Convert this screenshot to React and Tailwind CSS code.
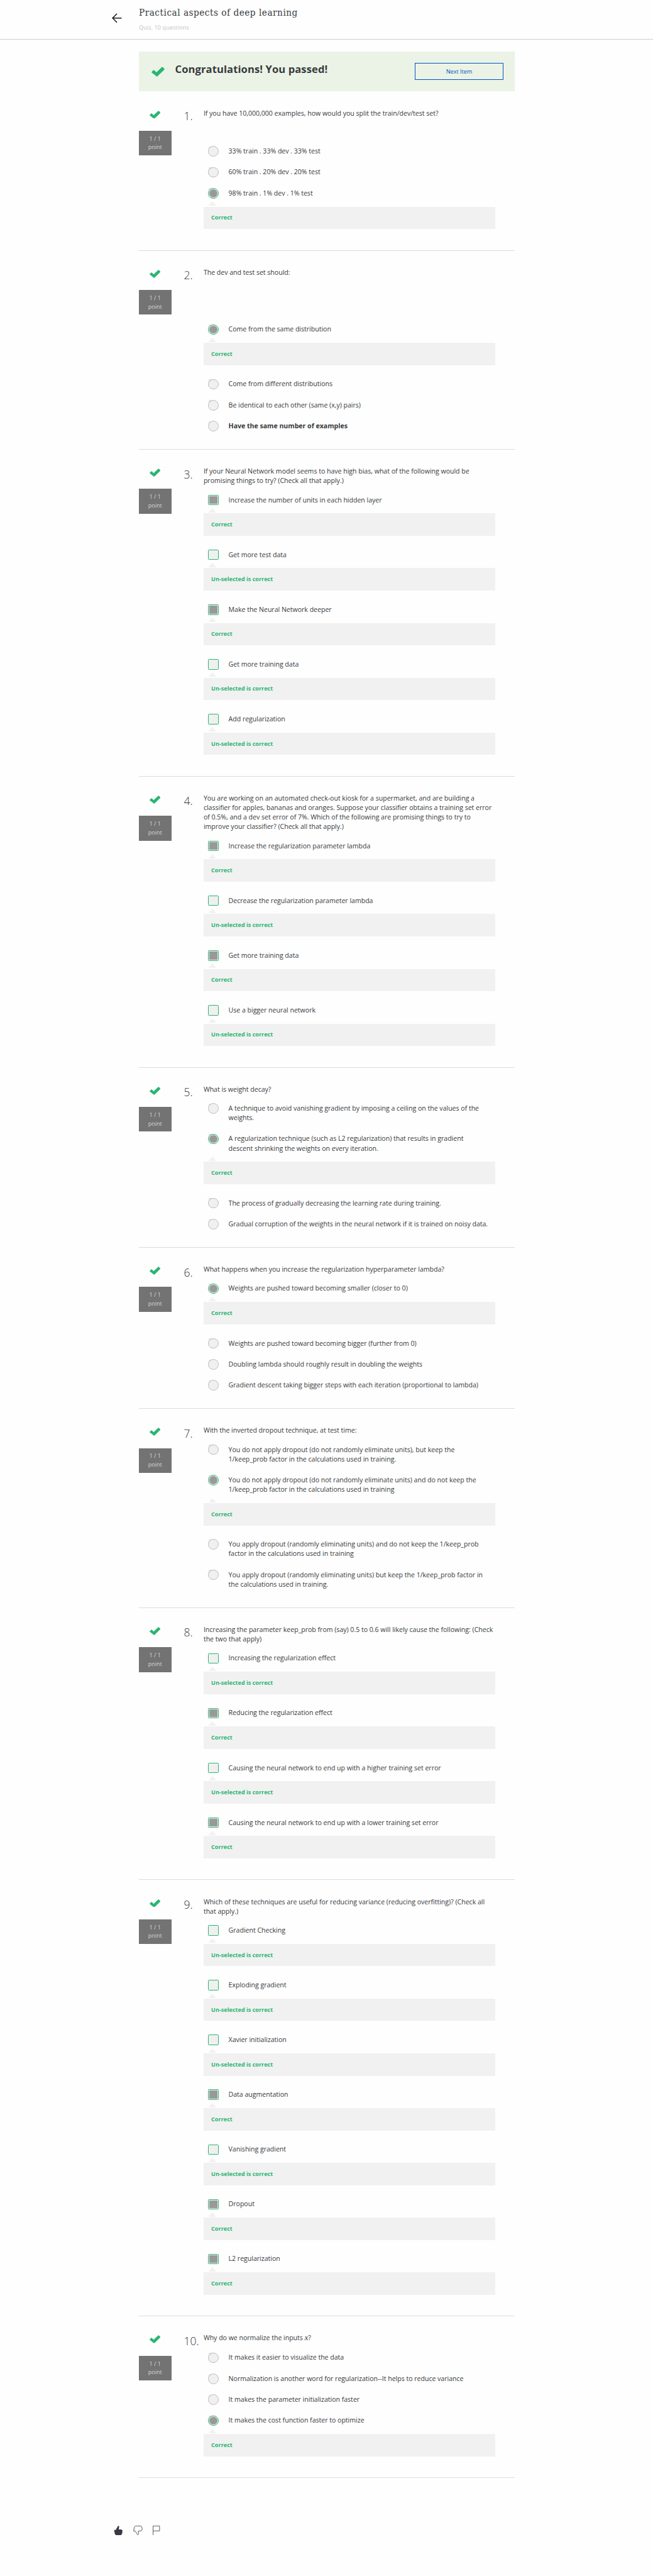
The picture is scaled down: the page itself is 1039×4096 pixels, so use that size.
import React from "react";

const SANS = "font-['Open_Sans','Noto_Sans',sans-serif]";

const questions = [
  {
    lines: ["If you have 10,000,000 examples, how would you split the train/dev/test set?"],
    gap: "h-[30.3px]",
    type: "radio",
    options: [
      { lines: ["33% train . 33% dev . 33% test"] },
      { lines: ["60% train . 20% dev . 20% test"] },
      { lines: ["98% train . 1% dev . 1% test"], on: true, note: "Correct" },
    ],
  },
  {
    lines: ["The dev and test set should:"],
    gap: "h-[60.4px]",
    type: "radio",
    options: [
      { lines: ["Come from the same distribution"], on: true, note: "Correct" },
      { lines: ["Come from different distributions"] },
      { lines: ["Be identical to each other (same (x,y) pairs)"] },
      { lines: ["Have the same number of examples"], bold: true },
    ],
  },
  {
    lines: [
      "If your Neural Network model seems to have high bias, what of the following would be",
      "promising things to try? (Check all that apply.)",
    ],
    type: "check",
    options: [
      { lines: ["Increase the number of units in each hidden layer"], on: true, note: "Correct" },
      { lines: ["Get more test data"], note: "Un-selected is correct" },
      { lines: ["Make the Neural Network deeper"], on: true, note: "Correct" },
      { lines: ["Get more training data"], note: "Un-selected is correct" },
      { lines: ["Add regularization"], note: "Un-selected is correct" },
    ],
  },
  {
    lines: [
      "You are working on an automated check-out kiosk for a supermarket, and are building a",
      "classifier for apples, bananas and oranges. Suppose your classifier obtains a training set error",
      "of 0.5%, and a dev set error of 7%. Which of the following are promising things to try to",
      "improve your classifier? (Check all that apply.)",
    ],
    type: "check",
    options: [
      { lines: ["Increase the regularization parameter lambda"], on: true, note: "Correct" },
      { lines: ["Decrease the regularization parameter lambda"], note: "Un-selected is correct" },
      { lines: ["Get more training data"], on: true, note: "Correct" },
      { lines: ["Use a bigger neural network"], note: "Un-selected is correct" },
    ],
  },
  {
    lines: ["What is weight decay?"],
    type: "radio",
    options: [
      {
        lines: [
          "A technique to avoid vanishing gradient by imposing a ceiling on the values of the",
          "weights.",
        ],
      },
      {
        lines: [
          "A regularization technique (such as L2 regularization) that results in gradient",
          "descent shrinking the weights on every iteration.",
        ],
        on: true,
        note: "Correct",
      },
      { lines: ["The process of gradually decreasing the learning rate during training."] },
      { lines: ["Gradual corruption of the weights in the neural network if it is trained on noisy data."] },
    ],
  },
  {
    lines: ["What happens when you increase the regularization hyperparameter lambda?"],
    type: "radio",
    options: [
      { lines: ["Weights are pushed toward becoming smaller (closer to 0)"], on: true, note: "Correct" },
      { lines: ["Weights are pushed toward becoming bigger (further from 0)"] },
      { lines: ["Doubling lambda should roughly result in doubling the weights"] },
      { lines: ["Gradient descent taking bigger steps with each iteration (proportional to lambda)"] },
    ],
  },
  {
    lines: ["With the inverted dropout technique, at test time:"],
    type: "radio",
    options: [
      {
        lines: [
          "You do not apply dropout (do not randomly eliminate units), but keep the",
          "1/keep_prob factor in the calculations used in training.",
        ],
      },
      {
        lines: [
          "You do not apply dropout (do not randomly eliminate units) and do not keep the",
          "1/keep_prob factor in the calculations used in training",
        ],
        on: true,
        note: "Correct",
      },
      {
        lines: [
          "You apply dropout (randomly eliminating units) and do not keep the 1/keep_prob",
          "factor in the calculations used in training",
        ],
      },
      {
        lines: [
          "You apply dropout (randomly eliminating units) but keep the 1/keep_prob factor in",
          "the calculations used in training.",
        ],
      },
    ],
  },
  {
    lines: [
      "Increasing the parameter keep_prob from (say) 0.5 to 0.6 will likely cause the following: (Check",
      "the two that apply)",
    ],
    type: "check",
    options: [
      { lines: ["Increasing the regularization effect"], note: "Un-selected is correct" },
      { lines: ["Reducing the regularization effect"], on: true, note: "Correct" },
      { lines: ["Causing the neural network to end up with a higher training set error"], note: "Un-selected is correct" },
      { lines: ["Causing the neural network to end up with a lower training set error"], on: true, note: "Correct" },
    ],
  },
  {
    lines: [
      "Which of these techniques are useful for reducing variance (reducing overfitting)? (Check all",
      "that apply.)",
    ],
    type: "check",
    options: [
      { lines: ["Gradient Checking"], note: "Un-selected is correct" },
      { lines: ["Exploding gradient"], note: "Un-selected is correct" },
      { lines: ["Xavier initialization"], note: "Un-selected is correct" },
      { lines: ["Data augmentation"], on: true, note: "Correct" },
      { lines: ["Vanishing gradient"], note: "Un-selected is correct" },
      { lines: ["Dropout"], on: true, note: "Correct" },
      { lines: ["L2 regularization"], on: true, note: "Correct" },
    ],
  },
  {
    lines: [
      <>
        Why do we normalize the inputs{" "}
        <i className="font-['Liberation_Serif',serif] text-[13px] leading-none">x</i>?
      </>,
    ],
    gap: "h-[0.8px]",
    type: "radio",
    options: [
      { lines: ["It makes it easier to visualize the data"] },
      { lines: ["Normalization is another word for regularization--It helps to reduce variance"] },
      { lines: ["It makes the parameter initialization faster"] },
      { lines: ["It makes the cost function faster to optimize"], on: true, note: "Correct" },
    ],
  },
];

function Check({ className }) {
  return (
    <svg viewBox="0 0 23 17" className={className} fill="#2ab573">
      <path d="M0.6 8.6 3.2 6q.8-.8 1.6 0L8.6 9.7 18 .6q.8-.8 1.6 0L22.4 3.4q.8.8 0 1.6L10.5 16.5q-.9.8-1.8 0L.6 10.2q-.8-.8 0-1.6z" />
    </svg>
  );
}

function Mark({ type, on }) {
  if (type === "radio") {
    return (
      <span className="relative size-[16.6px] shrink-0">
        <span className="absolute top-[0.5px] left-[0.5px] size-[6px] rounded-tl-[2px] bg-[#e0e0e0]" />
        <span
          className={
            "relative flex size-full items-center justify-center rounded-full border bg-[#f0f0f0] " +
            (on ? "border-[#2ab573]" : "border-[#bdbdbd]")
          }
        >
          {on && <span className="size-[12.6px] rounded-full bg-[#999]" />}
        </span>
      </span>
    );
  }
  return (
    <span className="flex size-[16.6px] shrink-0 items-center justify-center rounded-[1.5px] border border-[#2ab573] bg-[#f0f0f0]">
      {on && <span className="size-[12.6px] bg-[#999]" />}
    </span>
  );
}

function Option({ type, option }) {
  return (
    <div>
      <div className="flex pt-[8.3px] pb-[8.3px] pl-[7.5px]">
        <Mark type={type} on={option.on} />
        <div
          className={
            "ml-[15.6px] pt-[0.8px] pb-[0.8px] leading-[15.13px] " + (option.bold ? "font-bold" : "")
          }
        >
          {option.lines.map((line, i) => (
            <p key={i} className="whitespace-nowrap">{line}</p>
          ))}
        </div>
      </div>
      {option.note && (
        <div className="relative mt-[4.6px] mb-[13.6px] flex h-[35.6px] items-center bg-[#f1f1f1] pl-[12.2px]">
          <svg viewBox="0 0 14 8" className="absolute -top-[8.3px] left-[7.2px] h-[7.2px] w-[14px]" fill="#f1f1f1">
            <path d="M7 0 14 8H0z" />
          </svg>
          <span className="-mt-px text-[9.1px] leading-[13px] font-bold tracking-normal text-[#2ab573]">{option.note}</span>
        </div>
      )}
    </div>
  );
}

function Question({ question, index }) {
  return (
    <section className="flex border-b border-[#dcdcdc] pb-[19.8px]">
      <div className="w-[51.5px] shrink-0 pt-[30.2px] text-center">
        <Check className="mx-auto h-[12.9px] w-[17.4px]" />
        <div className="mt-[19.3px] flex h-[39.4px] flex-col justify-center bg-[#737373] text-[9.1px] leading-[13.8px] tracking-normal text-[#d4d4d4]">
          <p>1 / 1</p>
          <p>point</p>
        </div>
      </div>
      <div className="w-[51.4px] shrink-0 pt-[26.6px] pl-[20px] text-[17.5px] leading-[25px] font-light whitespace-nowrap">
        {index + 1}.
      </div>
      <div className="w-[464.6px] shrink-0 pt-[27.2px]">
        <div className="pb-[6px] leading-[15.13px]">
          {question.lines.map((line, i) => (
            <p key={i} className="whitespace-nowrap">{line}</p>
          ))}
        </div>
        {question.gap && <div className={question.gap} />}
        {question.options.map((option, i) => (
          <Option key={i} type={question.type} option={option} />
        ))}
      </div>
    </section>
  );
}

export default function App() {
  return (
    <div className={"min-h-[4096px] w-[1039px] overflow-hidden bg-[#fefefe] text-[10.6px] tracking-[-0.025px] text-[#373a3c] " + SANS}>
      <header className="flex h-[63px] border-b border-[#cfcfcf] pl-[178px]">
        <svg viewBox="0 0 20 20" className="mt-[21px] size-[15.5px]" fill="none" stroke="#1a1a1a" strokeWidth="2">
          <path d="M20 10H1.5M10.500 1 1.500 10l9 9" />
        </svg>
        <div className="ml-[27.500px] pt-[9px]">
          <h1 className="font-['DejaVu_Serif_Condensed','DejaVu_Serif',serif] text-[15.2px] leading-[22px] tracking-[0.5px] whitespace-nowrap">
            Practical aspects of deep learning
          </h1>
          <p className="mt-[6px] text-[9.1px] leading-[13px] tracking-[0.1px] text-[#c4c4c4]">Quiz, 10 questions</p>
        </div>
      </header>
      <main className="ml-[221px] w-[598px] pt-[18.8px]">
        <div className="flex h-[63.6px] items-center bg-[#ebf3e7] pr-[18px] pl-[20px]">
          <Check className="h-[16px] w-[21px]" />
          <h2 className="ml-[16.500px] -mt-[8px] text-[16.6px] leading-[22px] font-bold tracking-[0.08px] whitespace-nowrap">
            Congratulations! You passed!
          </h2>
          <button className="ml-auto h-[27.2px] w-[141px] border border-[#0156b9] text-[9.1px] tracking-normal text-[#0156b9]">
            Next Item
          </button>
        </div>
        {questions.map((question, i) => (
          <Question key={i} question={question} index={i} />
        ))}
      </main>
      <footer className="mt-[76px] ml-[181px] flex gap-[16px] text-[#373a44]">
        <svg viewBox="0 0 20 20" className="size-[15px]" fill="currentColor">
          <path d="M9 .5q1-1 2 .5.6 1 .2 3L10.600 8H15q3.500 0 3.500 3.500l-.8 5Q17 20 14 20H6q-3.500 0-4-4L.7 9h3.500z" />
        </svg>
        <svg viewBox="0 0 20 20" className="size-[15px]" fill="none" stroke="currentColor" strokeWidth="1.1">
          <path d="M9 19q1 1 2-.5.6-1 .2-3l-.6-4H15q3.500-.5 4-4l-.3-3Q18 .6 14.500.6H6Q3 .6 2.200 3.500L.8 11.500h3.500z" />
        </svg>
        <svg viewBox="0 0 20 20" className="size-[15px]" fill="none" stroke="currentColor" strokeWidth="1.1">
          <path d="M.8 20V.6H14.500v10.500H.8" />
        </svg>
      </footer>
    </div>
  );
}
